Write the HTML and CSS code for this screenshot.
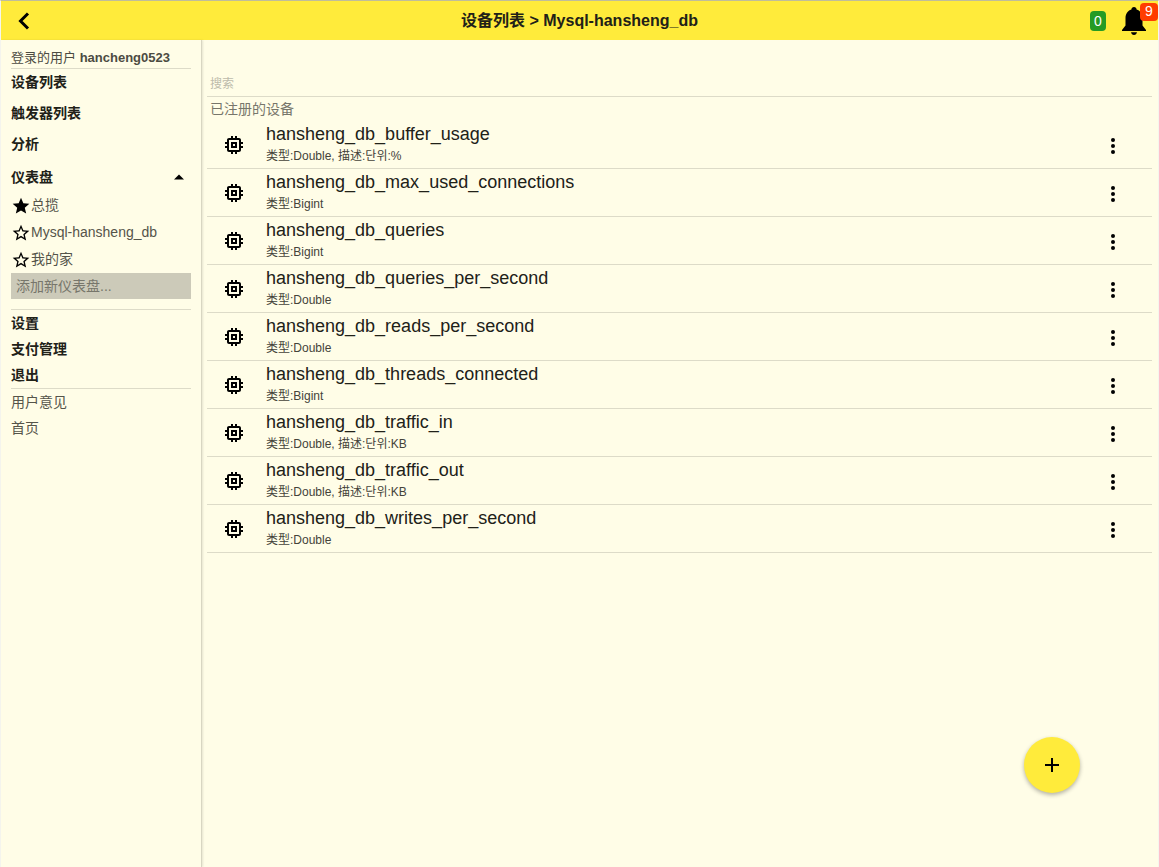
FILE: index.html
```html
<!DOCTYPE html>
<html lang="zh-CN">
<head>
<meta charset="utf-8">
<meta name="viewport" content="width=device-width, initial-scale=1">
<title>设备列表 &gt; Mysql-hansheng_db</title>
<link rel="stylesheet" href="styles.css">
</head>
<body>
<svg class="sprite" aria-hidden="true">
  <symbol id="chip" viewBox="0 0 24 24"><path d="M15 9H9v6h6V9zm-2 4h-2v-2h2v2zm8-2V9h-2V7c0-1.100-.9-2-2-2h-2V3h-2v2h-2V3H9v2H7c-1.100 0-2 .9-2 2v2H3v2h2v2H3v2h2v2c0 1.100.9 2 2 2h2v2h2v-2h2v2h2v-2h2c1.100 0 2-.9 2-2v-2h2v-2h-2v-2h2zm-4 6H7V7h10v10z"/></symbol>
  <symbol id="more" viewBox="0 0 24 24"><circle cx="12" cy="6" r="2"/><circle cx="12" cy="12" r="2"/><circle cx="12" cy="18" r="2"/></symbol>
  <symbol id="star" viewBox="0 0 24 24"><path d="M12 17.270L18.180 21l-1.640-7.030L22 9.240l-7.190-.61L12 2 9.190 8.630 2 9.240l5.460 4.730L5.820 21z"/></symbol>
  <symbol id="star-outline" viewBox="0 0 24 24"><path d="M22 9.240l-7.190-.62L12 2 9.190 8.630 2 9.240l5.460 4.730L5.820 21 12 17.270 18.180 21l-1.630-7.030L22 9.240zM12 15.400l-3.760 2.270 1-4.280-3.320-2.880 4.380-.38L12 6.100l1.710 4.040 4.380.38-3.320 2.880 1 4.280L12 15.400z"/></symbol>
</svg>
<div class="app">
  <header class="topbar">
    <button class="icon-button back" aria-label="返回"><svg viewBox="0 0 24 24"><path d="M15 4.500L7.500 12l7.500 7.500" fill="none" stroke="#000" stroke-width="3"/></svg></button>
    <h1 class="title">设备列表 &gt; Mysql-hansheng_db</h1>
    <div class="status">
      <span class="count">0</span>
      <button class="icon-button bell" aria-label="通知">
        <svg viewBox="0 0 24 28"><path d="M12 0c-1.500 0-2.600 1-2.600 2.500C5.500 3.800 3.500 7 3.500 11v7.500L0 23v1h24v-1l-3.500-4.500V11c0-4-2-7.200-5.900-8.500C14.600 1 13.500 0 12 0zM9 25.200c.3 1.600 1.400 2.800 3 2.800s2.700-1.200 3-2.800z"/></svg>
        <span class="badge">9</span>
      </button>
    </div>
  </header>
  <div class="body">
    <nav class="sidebar">
      <p class="user">登录的用户 <b>hancheng0523</b></p>
      <div class="group group-main">
        <a class="nav strong" href="#">设备列表</a>
        <a class="nav strong" href="#">触发器列表</a>
        <a class="nav strong" href="#">分析</a>
      </div>
      <button class="nav strong toggle" aria-expanded="true">仪表盘<svg viewBox="0 0 24 24"><path d="M6 15l6-6 6 6z"/></svg></button>
      <div class="boards">
        <a class="board" href="#"><svg><use href="#star"/></svg>总揽</a>
        <a class="board" href="#"><svg><use href="#star-outline"/></svg>Mysql-hansheng_db</a>
        <a class="board" href="#"><svg><use href="#star-outline"/></svg>我的家</a>
      </div>
      <input class="add-board" type="text" placeholder="添加新仪表盘..." aria-label="添加新仪表盘">
      <div class="group ruled">
        <a class="nav strong" href="#">设置</a>
        <a class="nav strong" href="#">支付管理</a>
        <a class="nav strong" href="#">退出</a>
      </div>
      <div class="group ruled">
        <a class="nav" href="#">用户意见</a>
        <a class="nav" href="#">首页</a>
      </div>
    </nav>
    <main class="content">
      <input class="search" type="text" placeholder="搜索" aria-label="搜索">
      <h2 class="subheader">已注册的设备</h2>
      <ul class="devices">
        <li class="device"><svg class="chip"><use href="#chip"/></svg><div class="info"><h3>hansheng_db_buffer_usage</h3><p>类型:Double, 描述:단위:%</p></div><button class="icon-button menu" aria-label="更多"><svg><use href="#more"/></svg></button></li>
        <li class="device"><svg class="chip"><use href="#chip"/></svg><div class="info"><h3>hansheng_db_max_used_connections</h3><p>类型:Bigint</p></div><button class="icon-button menu" aria-label="更多"><svg><use href="#more"/></svg></button></li>
        <li class="device"><svg class="chip"><use href="#chip"/></svg><div class="info"><h3>hansheng_db_queries</h3><p>类型:Bigint</p></div><button class="icon-button menu" aria-label="更多"><svg><use href="#more"/></svg></button></li>
        <li class="device"><svg class="chip"><use href="#chip"/></svg><div class="info"><h3>hansheng_db_queries_per_second</h3><p>类型:Double</p></div><button class="icon-button menu" aria-label="更多"><svg><use href="#more"/></svg></button></li>
        <li class="device"><svg class="chip"><use href="#chip"/></svg><div class="info"><h3>hansheng_db_reads_per_second</h3><p>类型:Double</p></div><button class="icon-button menu" aria-label="更多"><svg><use href="#more"/></svg></button></li>
        <li class="device"><svg class="chip"><use href="#chip"/></svg><div class="info"><h3>hansheng_db_threads_connected</h3><p>类型:Bigint</p></div><button class="icon-button menu" aria-label="更多"><svg><use href="#more"/></svg></button></li>
        <li class="device"><svg class="chip"><use href="#chip"/></svg><div class="info"><h3>hansheng_db_traffic_in</h3><p>类型:Double, 描述:단위:KB</p></div><button class="icon-button menu" aria-label="更多"><svg><use href="#more"/></svg></button></li>
        <li class="device"><svg class="chip"><use href="#chip"/></svg><div class="info"><h3>hansheng_db_traffic_out</h3><p>类型:Double, 描述:단위:KB</p></div><button class="icon-button menu" aria-label="更多"><svg><use href="#more"/></svg></button></li>
        <li class="device"><svg class="chip"><use href="#chip"/></svg><div class="info"><h3>hansheng_db_writes_per_second</h3><p>类型:Double</p></div><button class="icon-button menu" aria-label="更多"><svg><use href="#more"/></svg></button></li>
      </ul>
    </main>
  </div>
  <button class="fab" aria-label="添加"><svg viewBox="0 0 24 24"><path d="M19 13h-6v6h-2v-6H5v-2h6V5h2v6h6z"/></svg></button>
</div>
</body>
</html>
```
FILE: styles.css
```css
* {
  box-sizing: border-box;
}

body {
  margin: 0;
  background: #fffde7;
  color: #212118;
  font: 14px/20px "Liberation Sans", "Noto Sans CJK SC", "Noto Sans CJK KR", sans-serif;
}

h1, h2, h3, p, ul {
  margin: 0;
  padding: 0;
}

a {
  color: inherit;
  text-decoration: none;
}

button, input {
  border: 0;
  border-radius: 0;
  padding: 0;
  background: none;
  color: inherit;
  font: inherit;
}

svg {
  display: block;
  flex: none;
  width: 24px;
  height: 24px;
  fill: #000;
}

.sprite {
  display: none;
}

.app {
  display: flex;
  flex-direction: column;
  min-height: 100vh;
  border: 1px solid #f5f5ee;
  border-top-color: #c0bd9a;
  border-bottom: 0;
}

.icon-button {
  position: relative;
  display: flex;
  align-items: center;
  justify-content: center;
}

.topbar {
  display: grid;
  grid-template-columns: 1fr auto 1fr;
  align-items: center;
  height: 39px;
  padding: 0 12px;
  background: #ffeb3b;
}

.back {
  justify-self: start;
}

.title {
  font-size: 16px;
  line-height: 24px;
  font-weight: bold;
}

.status {
  display: flex;
  align-items: center;
  justify-content: flex-end;
  gap: 16px;
}

.count, .badge {
  border-radius: 4px;
  color: #fff;
  text-align: center;
}

.count {
  width: 16px;
  background: #259b24;
}

.bell svg {
  height: 28px;
}

.badge {
  position: absolute;
  top: -4px;
  right: -12px;
  width: 18px;
  padding-bottom: 2px;
  line-height: 16px;
  background: #ff3d00;
}

.body {
  display: flex;
  flex: 1;
}

.sidebar {
  display: flex;
  flex: none;
  flex-direction: column;
  width: 201px;
  padding: 8px 10px;
  border-right: 1px solid #d8d6c2;
  box-shadow: 1px 0 2px rgba(0, 0, 0, 0.1);
}

.user {
  border-bottom: 1px solid #dddbc8;
  color: #4c4b42;
  font-size: 13px;
}

.group {
  display: flex;
  flex-direction: column;
}

.group-main {
  gap: 5px;
}

.ruled {
  border-top: 1px solid #dddbc8;
}

.nav {
  color: #55544a;
  line-height: 26px;
}

.strong {
  color: #212118;
  font-weight: bold;
}

.toggle {
  display: flex;
  align-items: center;
  justify-content: space-between;
  margin: 7px 0 2px;
}

.toggle svg {
  width: 20px;
  height: 20px;
  margin-right: 2px;
}

.board {
  display: flex;
  align-items: center;
  color: #55544a;
  line-height: 27px;
}

.board svg {
  width: 20px;
  height: 20px;
}

.add-board {
  height: 26px;
  margin-bottom: 10px;
  padding: 0 5px;
  background: #cccab9;
}

.add-board::placeholder {
  color: #77766b;
}

.content {
  display: flex;
  flex: 1;
  flex-direction: column;
  min-width: 0;
  padding: 31px 6px 0 5px;
}

.search {
  height: 26px;
  padding: 0 3px;
  border-bottom: 1px solid #dddbc8;
  font-size: 12px;
}

.search::placeholder {
  color: #bdbbab;
}

.subheader {
  padding: 0 3px;
  color: #77766b;
  font-size: 14px;
  font-weight: normal;
  line-height: 24px;
}

.devices {
  list-style: none;
}

.device {
  display: flex;
  align-items: center;
  height: 48px;
  padding: 0 27px 0 15px;
  border-bottom: 1px solid #dddbc8;
}

.info {
  flex: 1;
  min-width: 0;
  padding: 0 0 2px 20px;
}

.info h3 {
  font-size: 18px;
  font-weight: normal;
  line-height: 24px;
}

.info p {
  color: #44433a;
  font-size: 12px;
}

.menu {
  padding-top: 2px;
}

.fab {
  position: fixed;
  right: 79px;
  bottom: 74px;
  display: flex;
  align-items: center;
  justify-content: center;
  width: 56px;
  height: 56px;
  border-radius: 50%;
  background: #ffeb3b;
  box-shadow: 0 2px 4px rgba(0, 0, 0, 0.3);
}
```
